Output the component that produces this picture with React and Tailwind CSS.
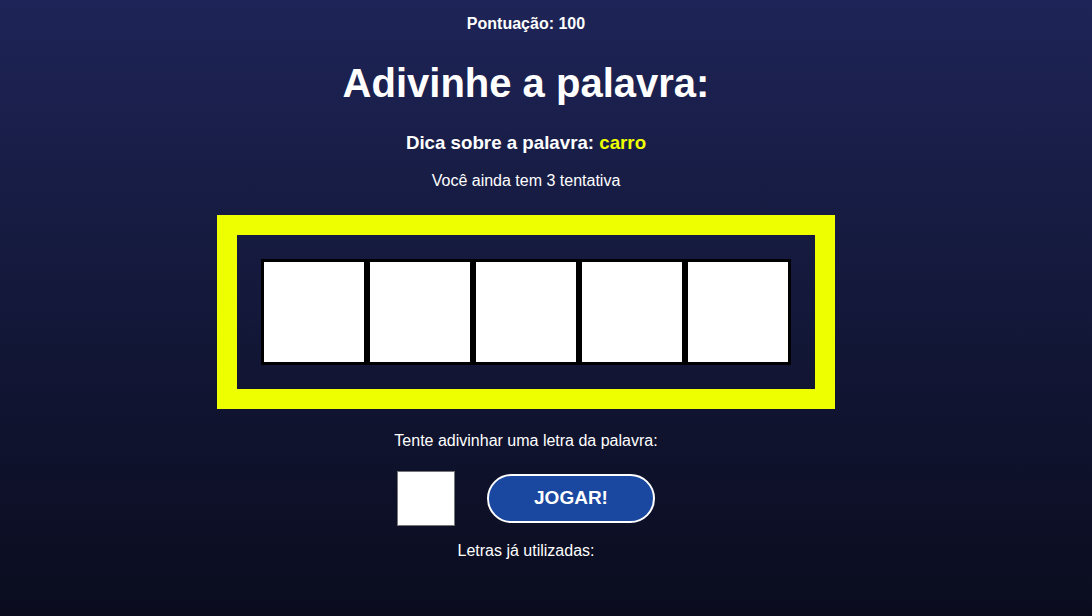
import React, { useState } from 'react';

function App() {
  const [letra, setLetra] = useState('');
  const palavra = 'carro';
  const cells = Array.from({ length: palavra.length });

  return (
    <div className="min-h-screen bg-gradient-to-b from-[#1e2457] to-[#0a0c1e] text-white font-['Liberation_Sans',Arial,sans-serif]">
      <div className="w-[1052px] flex flex-col items-center pt-[14px]">
        <p className="text-[16px] leading-[20px] font-bold">Pontuação: 100</p>
        <h1 className="mt-[25px] text-[40px] leading-[48px] font-bold">Adivinhe a palavra:</h1>
        <p className="mt-[24px] text-[18.72px] leading-[24px] font-bold">
          Dica sobre a palavra: <span className="text-[#eeff00]">carro</span>
        </p>
        <p className="mt-[16px] text-[16px] leading-[20px]">Você ainda tem 3 tentativa</p>

        {/* Board */}
        <div className="mt-[24px] border-[20px] border-[#eeff00] p-[24px] flex">
          {cells.map((_, i) => (
            <div key={i} className="w-[106px] h-[106px] bg-white border-[3px] border-black" />
          ))}
        </div>

        <p className="mt-[22px] text-[16px] leading-[20px]">Tente adivinhar uma letra da palavra:</p>

        <div className="mt-[20px] flex items-center gap-[32px]">
          <input
            type="text"
            maxLength={1}
            value={letra}
            onChange={(e) => setLetra(e.target.value)}
            className="w-[58px] h-[55px] bg-white border border-[#767676] text-black text-center text-2xl outline-none"
          />
          <button className="w-[168px] h-[49px] rounded-full bg-[#1a47a0] border-2 border-white text-white font-bold text-[19px] uppercase">
            Jogar!
          </button>
        </div>

        <p className="mt-[15px] text-[16px] leading-[20px]">Letras já utilizadas:</p>
      </div>
    </div>
  );
}

export default App;
